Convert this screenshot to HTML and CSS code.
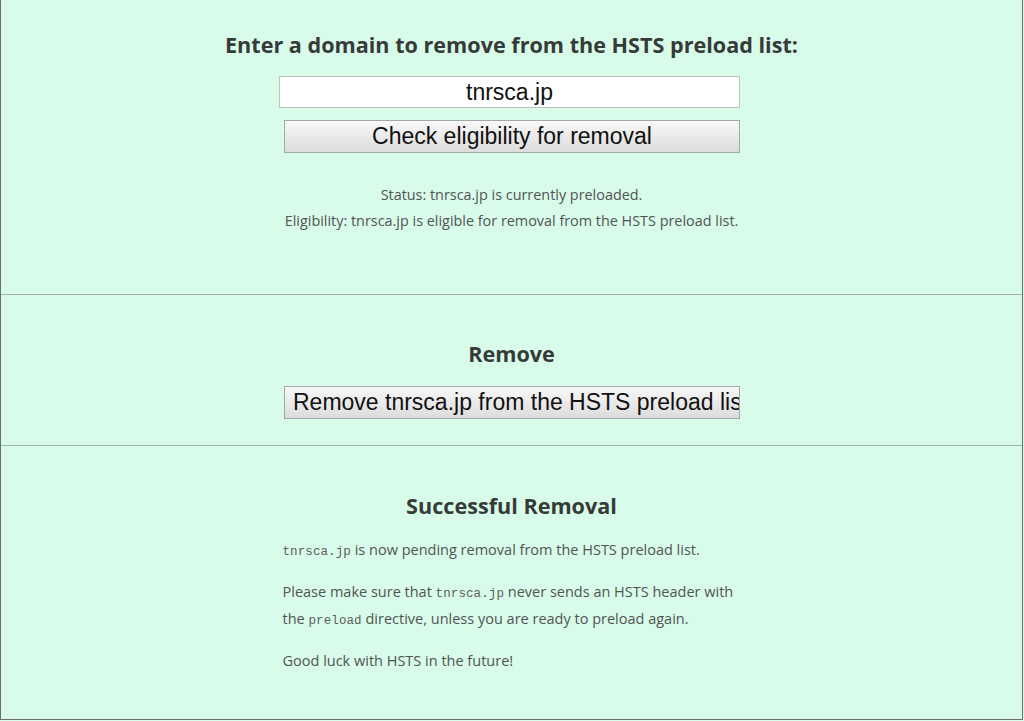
FILE: index.html
```html
<!DOCTYPE html>
<html>
<head>
<meta charset="utf-8">
<link rel="stylesheet" href="styles.css">
</head>
<body>
<div class="page">
  <section class="sec sec-check">
    <h2 class="title">Enter a domain to remove from the HSTS preload list:</h2>
    <div class="form">
      <input class="domain" type="text" value="tnrsca.jp">
      <button class="btn btn-check">Check eligibility for removal</button>
    </div>
    <div class="status">
      <div>Status: tnrsca.jp is currently preloaded.</div>
      <div>Eligibility: tnrsca.jp is eligible for removal from the HSTS preload list.</div>
    </div>
  </section>
  <section class="sec sec-remove">
    <h2 class="title">Remove</h2>
    <div class="form">
      <button class="btn btn-remove">Remove tnrsca.jp from the HSTS preload list</button>
    </div>
  </section>
  <section class="sec sec-done">
    <h2 class="title">Successful Removal</h2>
    <div class="body">
      <p class="p1"><code>tnrsca.jp</code> is now pending removal from the HSTS preload list.</p>
      <p>Please make sure that <code>tnrsca.jp</code> never sends an HSTS header with the <code>preload</code> directive, unless you are ready to preload again.</p>
      <p>Good luck with HSTS in the future!</p>
    </div>
  </section>
</div>
</body>
</html>
```
FILE: styles.css
```css
html, body {
  margin: 0;
  padding: 0;
  background: #d9fbea;
}
.page {
  box-sizing: border-box;
  width: 1023px;
  height: 720px;
  border: 1px solid #6b6f6c;
  border-top: none;
  background: #d9fbea;
  font-family: "Open Sans", "Noto Sans", sans-serif;
  color: #555;
  overflow: hidden;
}
.sec {
  border-bottom: 1px solid #a6b3ac;
}
.sec:last-child {
  border-bottom: none;
}
.title {
  margin: 0;
  font-size: 21.6px;
  line-height: 28px;
  font-weight: 700;
  color: #363b38;
  text-align: center;
}
.form {
  display: flex;
  flex-direction: column;
  align-items: center;
}
.domain {
  box-sizing: border-box;
  width: 461px;
  height: 32px;
  margin: 17px 0 0 -4px;
  padding: 0;
  border: 1px solid #b8c4bd;
  background: #fff;
  font-family: "Liberation Sans", Arial, sans-serif;
  font-size: 23px;
  color: #111;
  text-align: center;
  outline: none;
}
.btn {
  box-sizing: border-box;
  width: 456px;
  height: 33px;
  margin-left: 1px;
  border: 1px solid #a4a8a6;
  border-radius: 0;
  background: linear-gradient(#f8f8f8, #dcdcdc);
  font-family: "Liberation Sans", Arial, sans-serif;
  font-size: 23px;
  color: #111;
  padding: 0 8px;
  white-space: nowrap;
  overflow: hidden;
}
.btn-check {
  margin-top: 12px;
}
.btn-remove {
  margin-top: 18px;
  text-align: left;
}
.status {
  margin-top: 29px;
  text-align: center;
  font-size: 14.4px;
  line-height: 26px;
  color: #505552;
}
.sec-check {
  padding-top: 31px;
  padding-bottom: 60px;
}
.sec-remove {
  padding-top: 45px;
  padding-bottom: 26px;
}
.sec-done {
  padding-top: 46px;
}
.body {
  width: 458px;
  margin: 16px auto 0;
  font-size: 14.5px;
  line-height: 27px;
  color: #505552;
}
.body p {
  margin: 15px 0 0;
}
.body p.p1 {
  margin-top: 1px;
}
code {
  font-family: "Liberation Mono", "DejaVu Sans Mono", monospace;
  font-size: 12.5px;
  line-height: 1;
  letter-spacing: 0.1px;
  color: #5a5f5c;
}
```
